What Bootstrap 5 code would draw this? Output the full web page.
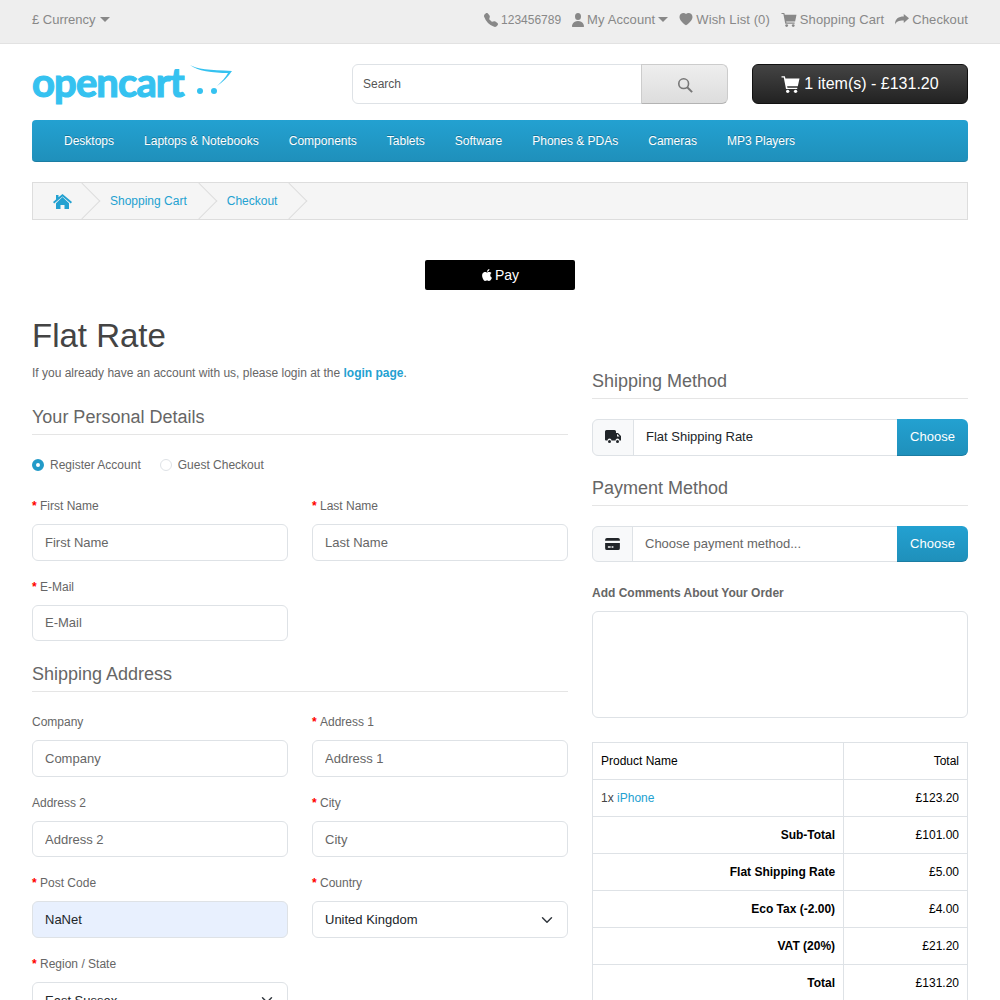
<!DOCTYPE html>
<html lang="en">

<head>
    <meta charset="UTF-8">
    <meta name="viewport" content="width=device-width, initial-scale=1.0">
    <title>Checkout</title>
    <link href="https://cdn.jsdelivr.net/npm/bootstrap@5.3.0/dist/css/bootstrap.min.css" rel="stylesheet">
    <style>
        body {
            font-family: "Liberation Sans", Arial, sans-serif;
            font-size: 12px;
            color: #666;
            line-height: 20px;
        }

        a {
            color: #23a1d1;
            text-decoration: none;
        }

        .page-wrap {
            padding: 0 32px;
        }

        .ico {
            fill: currentColor;
            flex: none;
        }

        /* top bar */
        .top-strip {
            height: 44px;
            padding-bottom: 4px;
            background: #eee;
            border-bottom: 1px solid #e2e2e2;
            font-size: 13px;
            color: #888;
        }

        .top-strip a {
            color: #888;
        }

        .top-links {
            gap: 11px;
            letter-spacing: .1px;
        }

        .top-links>* {
            gap: 3px;
        }

        .phone-no {
            font-size: 12px;
            letter-spacing: 0;
        }

        .caret-down {
            display: inline-block;
            border-top: 5px solid #888;
            border-left: 5px solid transparent;
            border-right: 5px solid transparent;
            margin-left: 4px;
            vertical-align: 2px;
        }

        .top-links .caret-down {
            margin-left: 3px;
        }

        /* header */
        .head-row {
            padding-top: 20px;
            height: 76px;
        }

        .logo-box {
            width: 320px;
            height: 40px;
        }

        .logo-word {
            font-family: Lato, sans-serif;
            font-weight: 700;
            font-size: 40px;
            line-height: 36px;
            color: #35c2f0;
            -webkit-text-stroke: 1.2px #35c2f0;
            letter-spacing: -.9px;
        }

        .logo-cart {
            margin-left: 5px;
        }

        .search-box {
            width: 376px;
            height: 40px;
        }

        .search-box .form-control {
            font-size: 12px;
            height: 40px;
            padding-left: 10px;
            color: #555;
        }

        .search-box .form-control::placeholder {
            color: #555;
        }

        .btn-search {
            width: 87px;
            background: linear-gradient(#eee, #ddd);
            border: 1px solid #ccc;
            border-bottom-color: #b3b3b3;
            color: #777;
        }

        .btn-total {
            width: 216px;
            height: 40px;
            margin-left: 24px;
            background: linear-gradient(#444, #222);
            border: 1px solid #111;
            color: #fff;
            font-size: 16px;
            line-height: 20px;
        }

        .btn-total:hover {
            background: #222;
            color: #fff;
        }

        /* menu */
        .main-menu {
            height: 42px;
            padding: 0 17px;
            background: linear-gradient(#23a1d1, #1f90bb);
            border-bottom: 1px solid #1b7da3;
            border-radius: 4px;
        }

        .main-menu .nav-link {
            padding: 0 15px;
            color: #fff;
            font-size: 12px;
            line-height: 42px;
            text-shadow: 0 -1px 0 rgba(0, 0, 0, .25);
        }

        /* breadcrumb */
        .crumbs {
            height: 38px;
            margin: 20px 0 40px;
            padding: 0;
            background: #f5f5f5;
            border: 1px solid #ddd;
            overflow: hidden;
            line-height: 36px;
        }

        .crumbs .breadcrumb-item {
            position: relative;
            padding: 0 30px 0 20px;
        }

        .crumbs .breadcrumb-item+.breadcrumb-item {
            padding-left: 10px;
        }

        .crumbs .breadcrumb-item:first-child {
            padding-right: 28px;
        }

        .crumbs .breadcrumb-item::before {
            display: none;
        }

        .crumbs .breadcrumb-item::after {
            content: "";
            position: absolute;
            top: 5px;
            right: 5px;
            width: 26px;
            height: 26px;
            border-top: 1px solid #ddd;
            border-right: 1px solid #ddd;
            transform: rotate(45deg);
        }

        /* apple pay */
        .apple-btn {
            display: flex;
            align-items: center;
            justify-content: center;
            gap: 2px;
            width: 150px;
            height: 30px;
            margin: 0 auto 28px;
            background: #000;
            border: 0;
            border-radius: 2px;
            color: #fff;
            font-size: 14px;
        }

        .page-title {
            font-size: 33px;
            line-height: 36px;
            color: #444;
            margin: 0 0 9px;
        }

        .intro-text {
            margin: 0 0 24px;
        }

        .col-gap {
            --bs-gutter-x: 24px;
        }

        .section-head {
            font-size: 18px;
            line-height: 20px;
            color: #666;
            font-weight: 400;
            margin: 0;
            padding-bottom: 7px;
            border-bottom: 1px solid #e5e5e5;
        }

        /* form */
        .form-control,
        .form-select {
            height: 36.6px;
            font-size: 13px;
            padding: 0 12px;
            color: #212529;
            border-color: #dee2e6;
        }

        .form-control::placeholder {
            color: #666;
        }

        .form-select {
            padding-right: 36px;
        }

        .filled-blue {
            background: #e8f0fe;
        }

        .field-label {
            display: block;
            margin: 0 0 8px;
            font-size: 12px;
            line-height: 20px;
            color: #666;
        }

        .need::before {
            content: "* ";
            color: #f00;
            font-weight: 700;
        }

        .field-row {
            --bs-gutter-x: 24px;
            --bs-gutter-y: 16px;
        }

        .form-check-input:checked {
            background-color: #fff;
            border: 4px solid #229ac8;
            background-image: none;
        }

        .radio-row {
            gap: 19px;
            margin: 20px 0 21px;
        }

        .radio-row .form-check-input {
            width: 12px;
            height: 12px;
            margin: 0 6px 0 0;
            border-color: #dee2e6;
        }

        .radio-row .form-check-input:checked {
            border-color: #229ac8;
        }

        .addr-head {
            margin-top: 23px;
        }

        .addr-fields {
            margin-top: 4px;
        }

        /* right side */
        .method-top {
            margin-top: 53px;
        }

        .method-group {
            margin: 20px 0 22px;
        }

        .method-group.pay-group {
            margin-bottom: 21px;
        }

        .method-group .input-group-text {
            background: #f8f9fa;
            color: #212529;
            width: 41px;
            justify-content: center;
            padding: 0;
        }

        .method-group .form-control {
            background: #fff;
        }

        .method-group .truck-cell {
            width: 42px;
        }

        .method-group .rate-value {
            padding-bottom: 1px;
        }

        .btn-choose {
            width: 71px;
            padding: 0;
            font-size: 13px;
            color: #fff;
            background: linear-gradient(#23a1d1, #1f90bb);
            border: 0;
            border-bottom: 1px solid #1b7da3;
        }

        .comment-box {
            height: 107px !important;
            resize: none;
        }

        .total-table {
            margin: 24px 0 0;
            font-size: 12px;
            color: #000;
        }

        .total-table td {
            height: 37px;
            padding: 8px;
            line-height: 20px;
            vertical-align: middle;
            color: #000;
        }

        .total-table .qty-text {
            color: #444;
        }
    </style>
</head>

<body>
    <div class="top-strip page-wrap d-flex align-items-center justify-content-between">
        <div>£ Currency<span class="caret-down"></span></div>
        <div class="top-links d-flex align-items-center">
            <span class="phone-no d-flex align-items-center">
                <svg class="ico" width="14" height="14" viewBox="0 0 16 16"><path fill-rule="evenodd" d="M1.885.511a1.745 1.745 0 0 1 2.61.163L6.29 2.98c.329.423.445.974.315 1.494l-.547 2.19a.678.678 0 0 0 .178.643l2.457 2.457a.678.678 0 0 0 .644.178l2.189-.547a1.745 1.745 0 0 1 1.494.315l2.306 1.794c.829.645.905 1.87.163 2.611l-1.034 1.034c-.74.74-1.846 1.065-2.877.702a18.634 18.634 0 0 1-7.01-4.42 18.634 18.634 0 0 1-4.42-7.009c-.362-1.03-.037-2.137.703-2.877L1.885.511z"/></svg>
                123456789</span>
            <a href="#" class="d-flex align-items-center">
                <svg class="ico" width="12" height="14" viewBox="0 0 16 16" preserveAspectRatio="none"><path d="M1 16s-1 0-1-1 1-6 8-6 8 5 8 6-1 1-1 1H1Zm7-8a4 4 0 1 0 0-8 4 4 0 0 0 0 8Z"/></svg>
                <span>My Account<span class="caret-down"></span></span></a>
            <a href="#" class="d-flex align-items-center">
                <svg class="ico" width="14" height="13" viewBox="0 0 16 16"><path d="M8 1.314C12.438-3.248 23.534 4.735 8 15-7.534 4.736 3.562-3.248 8 1.314z"/></svg>
                Wish List (0)</a>
            <a href="#" class="d-flex align-items-center">
                <svg class="ico" width="16" height="15" viewBox="0 0 16 16"><path d="M0 1h3l.5 2H16l-1.5 7H5l.3 1.3H14v1.2H4L2 2.2H0z"/><circle cx="5.5" cy="14.5" r="1.5"/><circle cx="12.5" cy="14.5" r="1.5"/></svg>
                Shopping Cart</a>
            <a href="#" class="d-flex align-items-center">
                <svg class="ico" width="14" height="14" viewBox="0 0 16 16"><path d="M16 6 10 1v3C4 4 0 6.500 0 13c1.500-3 4-4.500 10-4.500v3z"/></svg>
                Checkout</a>
        </div>
    </div>

    <div class="page-wrap">
        <div class="head-row d-flex">
            <div class="logo-box d-flex">
                <span class="logo-word">opencart</span>
                <svg class="logo-cart" width="44" height="34" viewBox="0 0 44 34" fill="#35c2f0">
                    <path d="M1 1c6 4 20 5 42 6-4 6-9 11-15 15 5-5 9-9 11-13C24 9 8 7 1 1z"/>
                    <circle cx="11" cy="27" r="3"/>
                    <circle cx="25" cy="27" r="3"/>
                </svg>
            </div>
            <div class="search-box input-group">
                <input type="text" class="form-control" placeholder="Search">
                <button type="button" class="btn btn-search">
                    <svg width="16" height="16" viewBox="0 0 18 18" fill="none" stroke="currentColor" stroke-width="1.800"><circle cx="7.500" cy="7.500" r="5.500"/><path d="m11.500 11.500 5.500 5.500" stroke-width="2.200"/></svg>
                </button>
            </div>
            <button type="button" class="btn btn-total d-flex align-items-center justify-content-center gap-1 p-0">
                <svg class="ico" width="19" height="18" viewBox="0 0 16 16"><path d="M0 1h3l.5 2H16l-1.500 7H5l.3 1.300H14v1.200H4L2 2.200H0z"/><circle cx="5.500" cy="14.500" r="1.500"/><circle cx="12.500" cy="14.500" r="1.500"/></svg>
                1 item(s) - £131.20</button>
        </div>

        <nav class="main-menu">
            <ul class="nav">
                <li class="nav-item"><a class="nav-link" href="#">Desktops</a></li>
                <li class="nav-item"><a class="nav-link" href="#">Laptops &amp; Notebooks</a></li>
                <li class="nav-item"><a class="nav-link" href="#">Components</a></li>
                <li class="nav-item"><a class="nav-link" href="#">Tablets</a></li>
                <li class="nav-item"><a class="nav-link" href="#">Software</a></li>
                <li class="nav-item"><a class="nav-link" href="#">Phones &amp; PDAs</a></li>
                <li class="nav-item"><a class="nav-link" href="#">Cameras</a></li>
                <li class="nav-item"><a class="nav-link" href="#">MP3 Players</a></li>
            </ul>
        </nav>

        <ul class="breadcrumb crumbs">
            <li class="breadcrumb-item"><a href="#" class="d-flex align-items-center h-100">
                <svg class="ico" width="19" height="15" viewBox="0 0 19 15"><path d="M9.500 0 19 8l-1.200 1.400-8.300-7-8.300 7L0 8l3-2.500V1h2.500v2.300z"/><path d="M3 9.200 9.500 3 16 9.200V15h-4.500v-4h-4v4H3z"/></svg>
            </a></li>
            <li class="breadcrumb-item"><a href="#">Shopping Cart</a></li>
            <li class="breadcrumb-item"><a href="#">Checkout</a></li>
        </ul>

        <button type="button" class="apple-btn">
            <svg class="ico" width="12" height="14" viewBox="0 0 16 16"><path d="M11.182.008C11.148-.03 9.923.023 8.857 1.180c-1.066 1.156-.902 2.482-.878 2.516.024.034 1.520.087 2.475-1.258.955-1.345.762-2.391.728-2.430zm3.314 11.733c-.048-.096-2.325-1.234-2.113-3.422.212-2.189 1.675-2.789 1.698-2.854.023-.065-.597-.790-1.254-1.157a3.692 3.692 0 0 0-1.563-.434c-.108-.003-.483-.095-1.254.116-.508.139-1.653.589-1.968.607-.316.018-1.256-.522-2.267-.665-.647-.125-1.333.131-1.824.328-.490.196-1.422.754-2.074 2.237-.652 1.482-.311 3.830-.067 4.560.244.729.625 1.924 1.273 2.796.576.984 1.340 1.667 1.659 1.899.319.232 1.219.386 1.843.067.502-.308 1.408-.485 1.766-.472.357.013 1.061.154 1.782.539.571.197 1.111.115 1.652-.105.541-.221 1.324-1.059 2.238-2.758.347-.790.505-1.217.473-1.282z"/></svg>
            Pay</button>

        <div class="row col-gap">
            <div class="col-7">
                <h1 class="page-title">Flat Rate</h1>
                <p class="intro-text">If you already have an account with us, please login at the <a href="#" class="fw-bold">login page</a>.</p>
                <h2 class="section-head">Your Personal Details</h2>
                <div class="radio-row d-flex align-items-center">
                    <label class="d-flex align-items-center"><input class="form-check-input" type="radio" name="acct" checked>Register Account</label>
                    <label class="d-flex align-items-center"><input class="form-check-input" type="radio" name="acct">Guest Checkout</label>
                </div>
                <div class="row field-row">
                    <div class="col-6"><label class="field-label need">First Name</label><input class="form-control" placeholder="First Name"></div>
                    <div class="col-6"><label class="field-label need">Last Name</label><input class="form-control" placeholder="Last Name"></div>
                    <div class="col-6"><label class="field-label need">E-Mail</label><input class="form-control" placeholder="E-Mail"></div>
                </div>
                <h2 class="section-head addr-head">Shipping Address</h2>
                <div class="row field-row addr-fields">
                    <div class="col-6"><label class="field-label">Company</label><input class="form-control" placeholder="Company"></div>
                    <div class="col-6"><label class="field-label need">Address 1</label><input class="form-control" placeholder="Address 1"></div>
                    <div class="col-6"><label class="field-label">Address 2</label><input class="form-control" placeholder="Address 2"></div>
                    <div class="col-6"><label class="field-label need">City</label><input class="form-control" placeholder="City"></div>
                    <div class="col-6"><label class="field-label need">Post Code</label><input class="form-control filled-blue" value="NaNet"></div>
                    <div class="col-6"><label class="field-label need">Country</label><select class="form-select"><option>United Kingdom</option></select></div>
                    <div class="col-6"><label class="field-label need">Region / State</label><select class="form-select"><option>East Sussex</option></select></div>
                </div>
            </div>
            <div class="col-5">
                <h2 class="section-head method-top">Shipping Method</h2>
                <div class="input-group method-group">
                    <span class="input-group-text truck-cell">
                        <svg class="ico" width="16" height="14" viewBox="0 0 16 14"><path fill-rule="evenodd" d="M0 1.500A1.500 1.500 0 0 1 1.500 0h8A1.500 1.500 0 0 1 11 1.500V3h2l3 3v4.500h-1.500a2 2 0 0 0-4 0h-4a2 2 0 0 0-4 0H1a1 1 0 0 1-1-1zM12 4.300V6.500h2.500l-2-2.200z"/><circle cx="4.500" cy="11.500" r="1.500"/><circle cx="12.500" cy="11.500" r="1.500"/></svg>
                    </span>
                    <input class="form-control rate-value" value="Flat Shipping Rate" readonly>
                    <button type="button" class="btn btn-choose">Choose</button>
                </div>
                <h2 class="section-head">Payment Method</h2>
                <div class="input-group method-group pay-group">
                    <span class="input-group-text">
                        <svg class="ico" width="15" height="12" viewBox="0 0 16 13"><path d="M2 0h12a2 2 0 0 1 2 2v1H0V2a2 2 0 0 1 2-2zM0 5.500h16V11a2 2 0 0 1-2 2H2a2 2 0 0 1-2-2zM3 9v1.500h3V9zm4 0v1.500h2V9z" fill-rule="evenodd"/></svg>
                    </span>
                    <input class="form-control" placeholder="Choose payment method..." readonly>
                    <button type="button" class="btn btn-choose">Choose</button>
                </div>
                <label class="field-label fw-bold">Add Comments About Your Order</label>
                <textarea class="form-control comment-box"></textarea>
                <table class="table table-bordered total-table">
                    <tbody>
                        <tr><td>Product Name</td><td class="text-end">Total</td></tr>
                        <tr><td><span class="qty-text">1x</span> <a href="#">iPhone</a></td><td class="text-end">£123.20</td></tr>
                        <tr><td class="text-end fw-bold">Sub-Total</td><td class="text-end">£101.00</td></tr>
                        <tr><td class="text-end fw-bold">Flat Shipping Rate</td><td class="text-end">£5.00</td></tr>
                        <tr><td class="text-end fw-bold">Eco Tax (-2.00)</td><td class="text-end">£4.00</td></tr>
                        <tr><td class="text-end fw-bold">VAT (20%)</td><td class="text-end">£21.20</td></tr>
                        <tr><td class="text-end fw-bold">Total</td><td class="text-end">£131.20</td></tr>
                    </tbody>
                </table>
            </div>
        </div>
    </div>
    <script src="https://cdn.jsdelivr.net/npm/bootstrap@5.3.0/dist/js/bootstrap.bundle.min.js"></script>
</body>

</html>
